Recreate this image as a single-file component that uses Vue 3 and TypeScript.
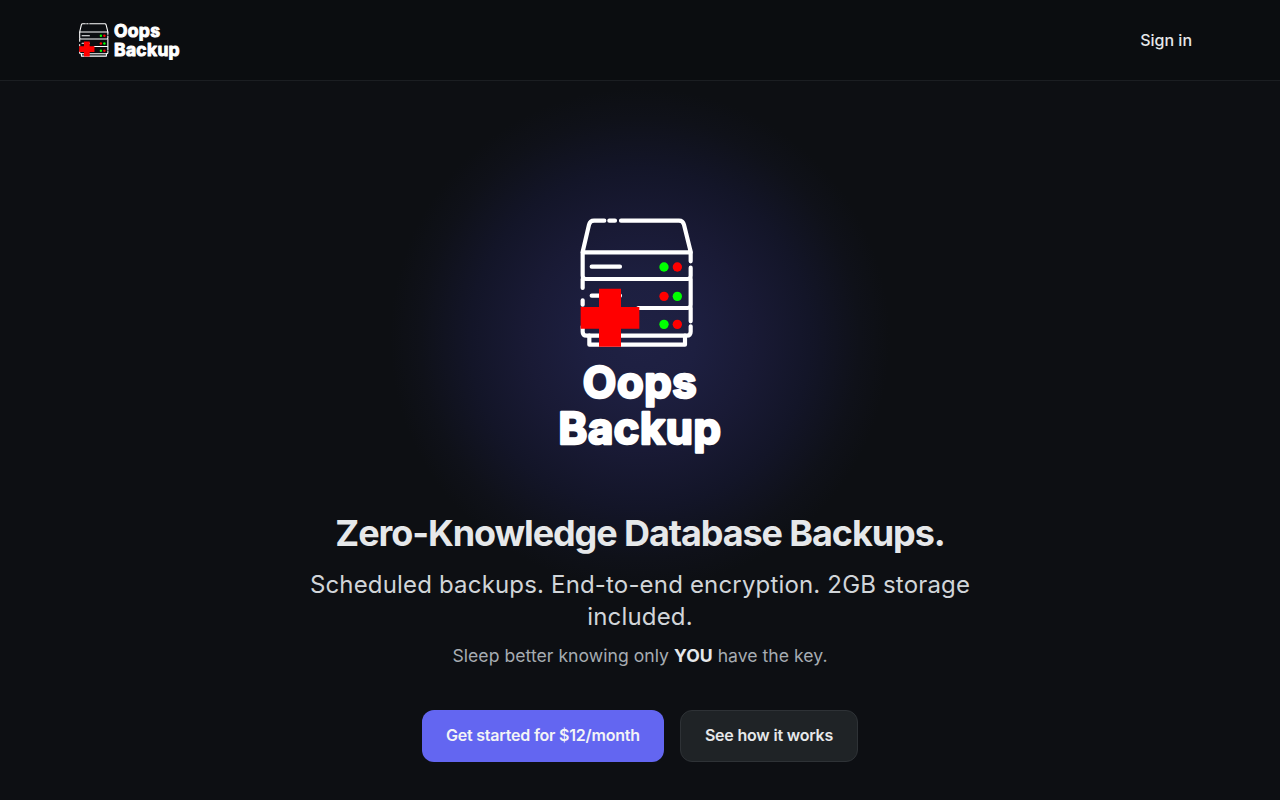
<script setup lang="ts">
const leds = [
  { x: 312, y: 172, fill: '#00ff00' },
  { x: 352, y: 172, fill: '#ff0000' },
  { x: 312, y: 260, fill: '#ff0000' },
  { x: 352, y: 260, fill: '#00ff00' },
  { x: 312, y: 344, fill: '#00ff00' },
  { x: 352, y: 344, fill: '#ff0000' },
]
</script>

<template>
  <div class="page">
    <svg class="defs" width="0" height="0" aria-hidden="true">
      <symbol id="server" viewBox="60 25 345 390">
        <g fill="none" stroke="#fff" stroke-width="12.5" stroke-linecap="round" stroke-linejoin="round">
          <path d="M133 33H102Q90 33 87 45L70 118Q68 124 68 128H392Q392 124 390 118L372 45Q369 33 357 33H183" />
          <path d="M148 33H165" />
          <path d="M392 128V155M392 174V198Q392 208 382 208H78Q68 208 68 198V128" />
          <path d="M68 208V235M392 208V285Q392 295 382 295H235" />
          <path d="M68 272V285M392 295V335M392 350V366Q392 378 380 378H80Q68 378 68 366V350" />
          <path d="M88 378V405H375V378" />
          <path d="M95 171H180M95 258H180" />
        </g>
        <circle v-for="led in leds" :key="`${led.x}-${led.y}`" :cx="led.x" :cy="led.y" r="14" :fill="led.fill" />
        <path d="M117 237H183V292H238V357H183V411H117V357H62V292H117Z" fill="#ff0000" />
      </symbol>
    </svg>

    <header class="topbar">
      <div class="topbar-inner">
        <a class="brand" href="#">
          <svg class="brand-icon"><use href="#server" /></svg>
          <svg class="brand-word" viewBox="0 0 70 46">
            <text x="1" y="20">Oops</text>
            <text x="1" y="39">Backup</text>
          </svg>
        </a>
        <a class="signin" href="#">Sign in</a>
      </div>
    </header>

    <main class="hero">
      <div class="hero-logo">
        <svg class="hero-icon"><use href="#server" /></svg>
        <svg class="hero-word" viewBox="0 0 170 106">
          <text x="85" y="42" text-anchor="middle">Oops</text>
          <text x="85" y="88" text-anchor="middle">Backup</text>
        </svg>
      </div>
      <h1>Zero-Knowledge Database Backups.</h1>
      <p class="lead">Scheduled backups. End-to-end encryption. 2GB storage included.</p>
      <p class="note">Sleep better knowing only <strong>YOU</strong> have the key.</p>
      <div class="actions">
        <a class="btn primary" href="#">Get started for $12/month</a>
        <a class="btn secondary" href="#">See how it works</a>
      </div>
    </main>
  </div>
</template>

<style>
body {
  margin: 0;
  background: #0d0f13;
}
</style>

<style scoped>
.page {
  min-height: 800px;
  overflow: hidden;
  font-family: Inter, "Liberation Sans", sans-serif;
  color: #e6e8ea;
  background: radial-gradient(circle 250px at 640px 338px, #1f2144 0%, #1d1f40 22%, #191a35 45%, #131528 68%, #0f1119 88%, #0d0f13 100%), #0d0f13;
}

.defs {
  position: absolute;
}

.topbar {
  height: 80px;
  border-bottom: 1px solid #1b1e22;
  background: #0b0d10;
}

.topbar-inner {
  max-width: 1120px;
  height: 80px;
  margin: 0 auto;
  display: flex;
  align-items: center;
  justify-content: space-between;
}

.brand {
  display: flex;
  align-items: center;
  gap: 4px;
  margin-left: -1px;
  text-decoration: none;
}

.brand-icon {
  width: 30px;
  height: 34px;
}

.brand-word {
  width: 70px;
  height: 46px;
}

.brand-word text,
.hero-word text {
  font-family: Inter, sans-serif;
  font-weight: 700;
  fill: #fff;
  stroke: #fff;
  stroke-linejoin: round;
}

.brand-word text {
  font-size: 17.5px;
  letter-spacing: 0.3px;
  stroke-width: 1px;
}

.hero-word text {
  font-size: 43.5px;
  letter-spacing: 0.6px;
  stroke-width: 2.6px;
}

.signin {
  padding: 8px;
  font-size: 16px;
  font-weight: 500;
  line-height: 24px;
  color: #e6e8ea;
  text-decoration: none;
}

.hero {
  display: flex;
  flex-direction: column;
  align-items: center;
  text-align: center;
  padding-top: 137px;
}

.hero-logo {
  display: flex;
  flex-direction: column;
  align-items: center;
  gap: 8px;
}

.hero-icon {
  width: 115px;
  height: 130px;
  margin-left: -6px;
}

.hero-word {
  width: 170px;
  height: 106px;
}

h1 {
  margin: 51px 0 0;
  font-size: 36px;
  line-height: 40px;
  font-weight: 700;
  letter-spacing: -1.1px;
  color: #e6e8ea;
}

.lead {
  width: 672px;
  margin: 16px 0 0;
  font-size: 24px;
  line-height: 32px;
  letter-spacing: 0.17px;
  color: #d1d5d9;
}

.note {
  margin: 9px 0 0;
  font-size: 17.6px;
  line-height: 28px;
  letter-spacing: 0.03px;
  color: #a6acb2;
}

.note strong {
  font-weight: 700;
  color: #e6e8ea;
}

.actions {
  display: flex;
  gap: 16px;
  margin-top: 40px;
}

.btn {
  box-sizing: border-box;
  height: 52px;
  display: flex;
  align-items: center;
  padding: 0 24px 2px;
  border-radius: 12px;
  font-size: 16px;
  font-weight: 600;
  letter-spacing: -0.2px;
  text-decoration: none;
}

.primary {
  background: #6366f1;
  color: #f3f4f6;
}

.secondary {
  background: #1f2326;
  border: 1px solid #2e3236;
  color: #e6e8ea;
}
</style>
